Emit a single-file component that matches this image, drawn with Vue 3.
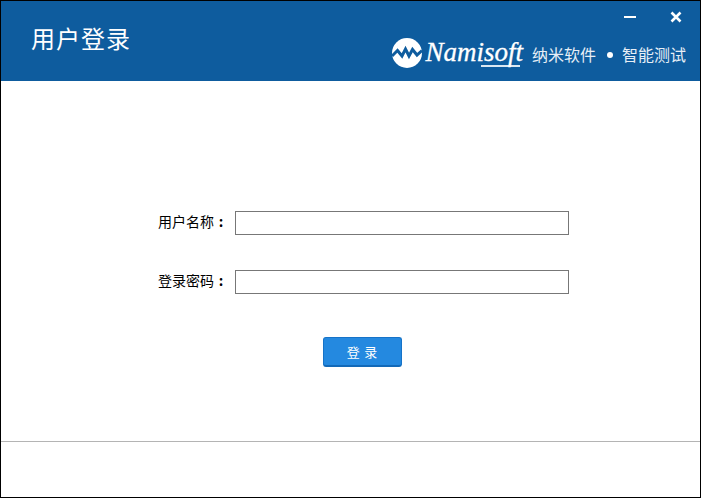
<template>
  <div class="window">
    <header class="header">
      <h1 class="title">用户登录</h1>
      <div class="header-right">
        <div class="controls">
          <svg class="ctl" width="12" height="12" viewBox="0 0 12 12"><rect x="0" y="5" width="12" height="2" fill="#fff" /></svg>
          <svg class="ctl" width="12" height="12" viewBox="0 0 12 12"><path d="M1.5 1.5L10.5 10.5M10.5 1.5L1.5 10.5" stroke="#fff" stroke-width="2.6" fill="none" /></svg>
        </div>
        <div class="brand">
          <svg class="logo" width="30" height="30" viewBox="0 0 30 30">
            <circle cx="15" cy="15" r="15" fill="#fff" />
            <path d="M0 18L5.5 12.5L10 18L13.5 11L17 18L20.5 11.5L25 17L30 12.5" stroke="#0e5c9e" stroke-width="3" fill="none" />
          </svg>
          <span class="name">Namisoft</span>
          <span class="slogan first">纳米软件</span>
          <span class="dot"></span>
          <span class="slogan">智能测试</span>
        </div>
      </div>
    </header>
    <main class="body">
      <div class="form">
        <div v-for="f in fields" :key="f" class="row">
          <label class="label">{{ f }}<span class="colon">:</span></label>
          <input class="input" type="text" />
        </div>
        <button class="btn" type="button">登 录</button>
      </div>
    </main>
    <footer class="footer"></footer>
  </div>
</template>

<script setup>
const fields = ['用户名称', '登录密码']
</script>

<style>
html, body { margin: 0; background: #fff; }
</style>

<style scoped>
.window {
  box-sizing: border-box;
  width: 701px;
  height: 498px;
  border: 1px solid #000;
  display: flex;
  flex-direction: column;
  font-family: "Noto Sans CJK SC", "Liberation Sans", sans-serif;
  background: #fff;
}
.header {
  height: 80px;
  background: #0e5c9e;
  display: flex;
  justify-content: space-between;
  color: #fff;
  flex: none;
}
.title {
  margin: 20px 0 0 30px;
  font-size: 24px;
  line-height: 34px;
  font-weight: 400;
  letter-spacing: 1px;
  height: 34px;
}
.header-right {
  display: flex;
  flex-direction: column;
  align-items: flex-end;
  padding-right: 14px;
}
.controls {
  display: flex;
  gap: 34px;
  margin-top: 10px;
  margin-right: 4px;
}
.brand {
  display: flex;
  align-items: center;
  margin-top: 13px;
  height: 34px;
}
.logo { margin-right: 3px; }
.name {
  font-family: "Liberation Serif", serif;
  font-style: italic;
  font-size: 27px;
  line-height: 34px;
  margin-right: 9px;
  margin-top: -3px;
  position: relative;
  -webkit-text-stroke: 0.3px #fff;
}
.name::after {
  content: "";
  position: absolute;
  left: 56px;
  right: 3px;
  bottom: 2px;
  height: 2px;
  background: #fff;
  opacity: 0.85;
}
.slogan {
  font-size: 16px;
  line-height: 24px;
  color: #e6eef6;
  margin-top: 2px;
}
.dot {
  width: 6px;
  height: 6px;
  border-radius: 50%;
  background: #fff;
  margin: 3px 9px 0 11px;
}
.body { flex: 1; }
.form {
  display: flex;
  flex-direction: column;
  align-items: flex-start;
  padding-top: 130px;
}
.row {
  display: flex;
  align-items: center;
  height: 24px;
  margin-bottom: 35px;
}
.label {
  display: flex;
  justify-content: flex-end;
  align-items: center;
  width: 234px;
  box-sizing: border-box;
  font-size: 14px;
  line-height: 20px;
  margin-top: -4px;
  color: #000;
  padding-right: 9px;
}
.colon {
  width: 10px;
  text-align: center;
  margin-left: 2px;
  font-size: 14px;
  font-weight: 700;
}
.input {
  box-sizing: border-box;
  width: 334px;
  height: 24px;
  border: 1px solid #777;
  border-radius: 0;
  background: #fff;
  padding: 0 4px;
  outline: none;
}
.btn {
  box-sizing: border-box;
  width: 79px;
  height: 30px;
  margin: 8px 0 0 322px;
  background: #2489e0;
  border: 1px solid #1673c8;
  border-bottom: 2px solid #1269b8;
  border-radius: 3px;
  color: #fff;
  font-family: inherit;
  font-size: 13px;
  letter-spacing: 0.8px;
  padding: 0;
}
.footer {
  height: 55px;
  border-top: 1px solid #b4b4b4;
  flex: none;
}
</style>
